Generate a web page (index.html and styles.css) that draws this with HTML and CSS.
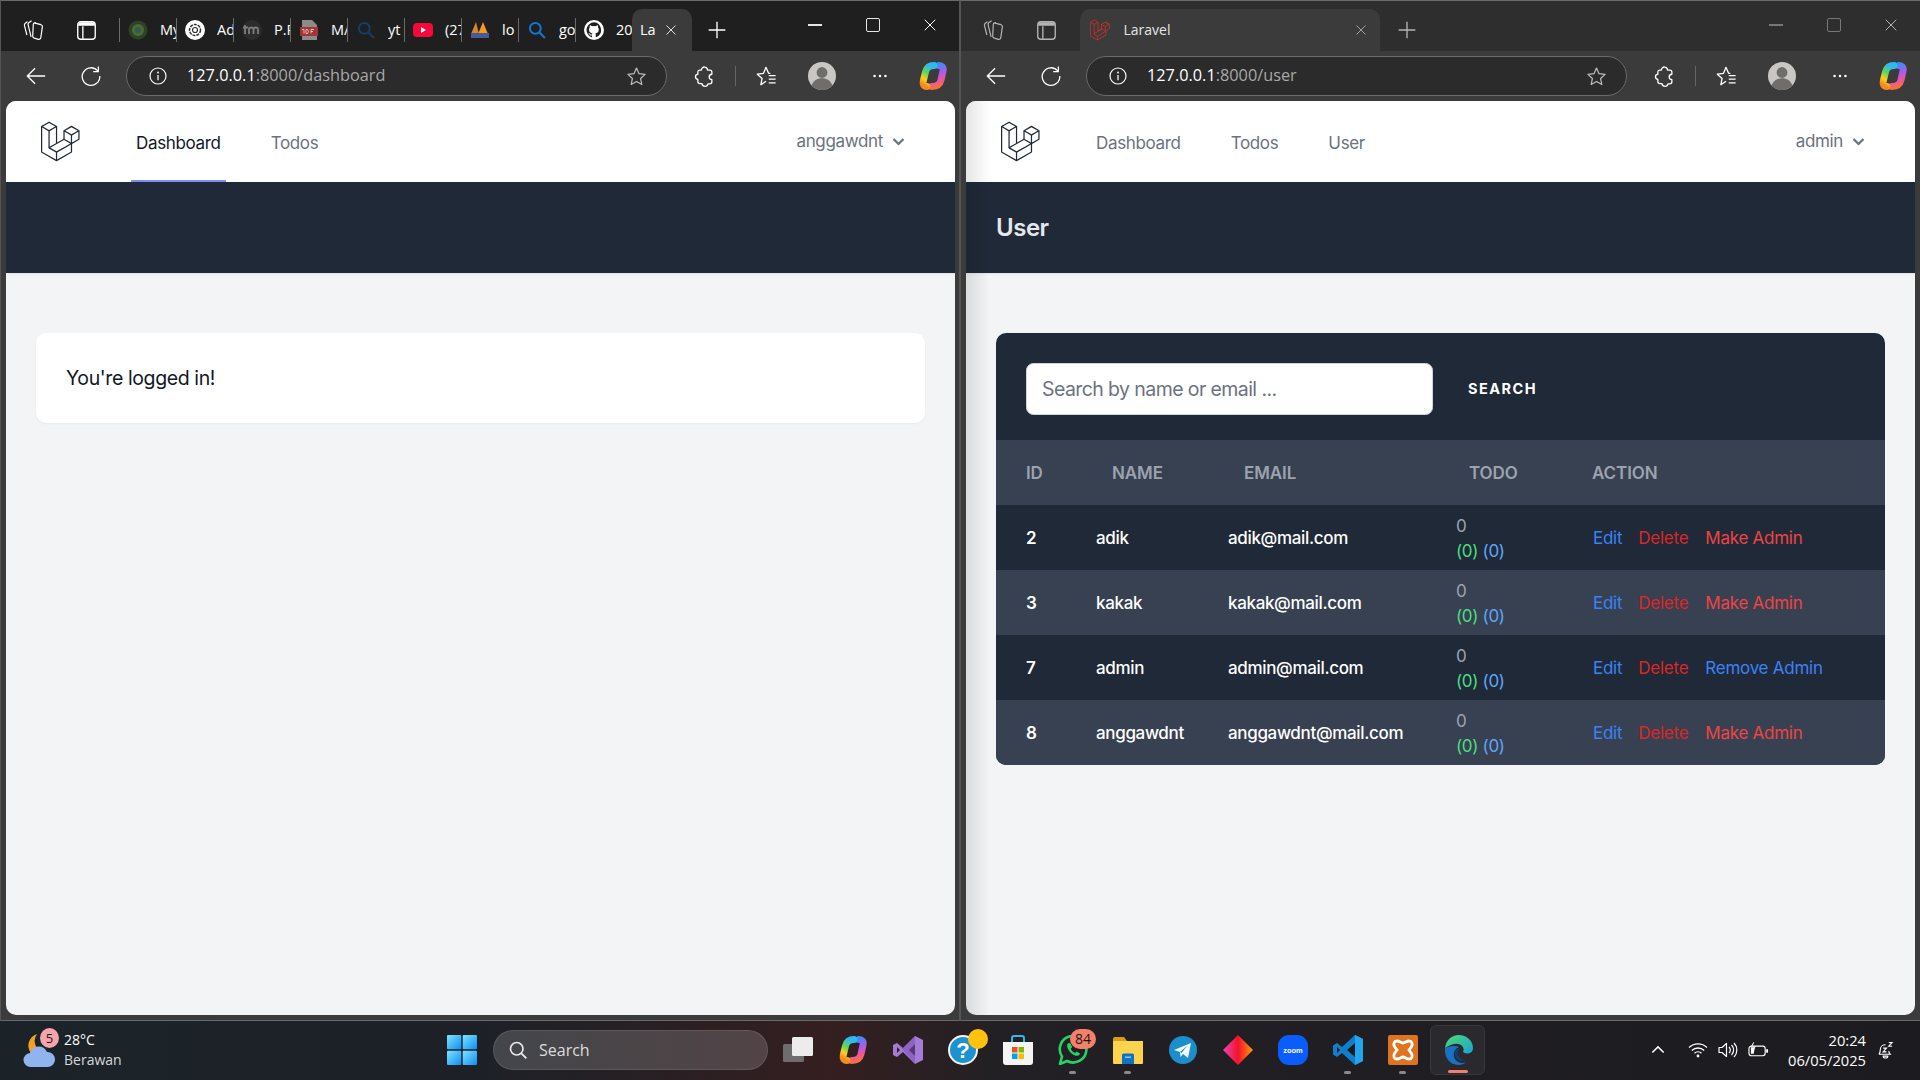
FILE: index.html
```html
<!DOCTYPE html>
<html lang="en">
<head>
<meta charset="utf-8">
<title>Laravel</title>
<link rel="stylesheet" href="styles.css">
</head>
<body>
<svg class="sprite" width="0" height="0" aria-hidden="true">
  <defs>
    <linearGradient id="cpA" x1="0.6" y1="0" x2="0.3" y2="1"><stop offset="0" stop-color="#2fb8f2"/><stop offset=".4" stop-color="#5fd65a"/><stop offset=".72" stop-color="#fbd11e"/><stop offset="1" stop-color="#f58a1f"/></linearGradient>
    <linearGradient id="cpB" x1="0.4" y1="0" x2="0.6" y2="1"><stop offset="0" stop-color="#3f8cf5"/><stop offset=".4" stop-color="#a85cea"/><stop offset=".75" stop-color="#f0559c"/><stop offset="1" stop-color="#f7703c"/></linearGradient>
    <linearGradient id="edgeG" x1="0" y1="0" x2="1" y2="1"><stop offset="0" stop-color="#52d96d"/><stop offset="1" stop-color="#17a3d6"/></linearGradient>
    <linearGradient id="winG" x1="0" y1="0" x2="1" y2="1"><stop offset="0" stop-color="#7fe4ff"/><stop offset="1" stop-color="#0c8df0"/></linearGradient>
    <linearGradient id="gemG" x1="0" y1="0" x2="1" y2="0"><stop offset="0" stop-color="#ef45b5"/><stop offset=".5" stop-color="#f4112e"/><stop offset="1" stop-color="#ff9d00"/></linearGradient>
    <symbol id="i-workspaces" viewBox="0 0 24 24"><path d="M6.500 3.600 4.300 5.300c-.8.6-1 1.500-.8 2.400l2.400 9.300" fill="none" stroke="currentColor" stroke-width="1.200"/><path d="M10.600 2.700 8 4.400c-.8.6-1.100 1.500-.9 2.400l3 12" fill="none" stroke="currentColor" stroke-width="1.200"/><path d="M12.800 4.800 20 6.700c1 .3 1.500 1 1.400 2l-1.600 11c-.2 1.200-1.200 1.900-2.300 1.600l-4.300-1.100c-1-.3-1.500-1.100-1.500-2.100l.6-11.800c.1-1.200 1.300-1.800 2.500-1.500z" fill="none" stroke="currentColor" stroke-width="1.200"/></symbol>
    <symbol id="i-tabs" viewBox="0 0 24 24"><rect x="3.600" y="3.600" width="16.800" height="16.800" rx="3" fill="none" stroke="currentColor" stroke-width="1.300"/><path d="M4 7.500V7a3 3 0 0 1 3-3h10a3 3 0 0 1 3 3v.5z" fill="currentColor"/><path d="M8.500 8v12" stroke="currentColor" stroke-width="1.300"/></symbol>
    <symbol id="i-back" viewBox="0 0 24 24"><path d="M22 12H2.500M11 3.500 2.500 12l8.500 8.500" fill="none" stroke="currentColor" stroke-width="1.400"/></symbol>
    <symbol id="i-reload" viewBox="0 0 24 24"><path d="M19.500 6.600A9.600 9.600 0 1 0 21.600 12" fill="none" stroke="currentColor" stroke-width="1.400"/><path d="M20 1.600v5.600h-5.600" fill="none" stroke="currentColor" stroke-width="1.400"/></symbol>
    <symbol id="i-info" viewBox="0 0 24 24"><circle cx="12" cy="12" r="9.600" fill="none" stroke="currentColor" stroke-width="1.400"/><circle cx="12" cy="7.800" r="1.100" fill="currentColor"/><path d="M12 10.800v6.200" stroke="currentColor" stroke-width="1.500"/></symbol>
    <symbol id="i-star" viewBox="0 0 24 24"><path d="m12 2.400 2.900 6.400 6.900.8-5.100 4.700 1.400 6.900-6.100-3.500-6.100 3.500 1.400-6.900-5.100-4.700 6.900-.8z" fill="none" stroke="currentColor" stroke-width="1.400" stroke-linejoin="round"/></symbol>
    <symbol id="i-ext" viewBox="0 0 24 24"><path d="M8 5.500c.2-2.400 2-3.500 3.700-3.300 1.700.1 2.900 1.400 3.100 3.300h2.400c1.400 0 2.300.9 2.300 2.300v2.300c-1.800.2-3 1.300-3 2.900s1.200 2.700 3 2.900v2.300c0 1.400-.9 2.300-2.300 2.300h-2c-.3 1.700-1.600 2.700-3.200 2.700S9 22 8.700 20.300H6.500c-1.400 0-2.300-.9-2.300-2.300v-2.200C2.600 15.500 1.600 14.400 1.600 12.900s1-2.600 2.600-2.900V7.800c0-1.400.9-2.300 2.300-2.300z" fill="none" stroke="currentColor" stroke-width="1.400" stroke-linejoin="round"/></symbol>
    <symbol id="i-fav" viewBox="0 0 24 24"><path d="M12 17.800l-5.600 3.700 1.300-6.800L2.500 10l6.800-.9L12 2.500l2.800 6.600h2" fill="none" stroke="currentColor" stroke-width="1.400" stroke-linejoin="round"/><path d="M15 11.500h7.500M15 15.500h7.500M15 19.500h7.500" stroke="currentColor" stroke-width="1.400"/></symbol>
    <symbol id="i-profile" viewBox="0 0 28 28"><circle cx="14" cy="14" r="14" fill="#c9c7c3"/><circle cx="14" cy="10.500" r="5.400" fill="#6f6e6c"/><path d="M3.700 23.500c1.600-5 5.600-7.200 10.300-7.200s8.700 2.200 10.300 7.200A14 14 0 0 1 14 28a14 14 0 0 1-10.300-4.500z" fill="#6f6e6c"/></symbol>
    <symbol id="i-dots" viewBox="0 0 24 24"><circle cx="5.500" cy="12" r="1.500" fill="currentColor"/><circle cx="12" cy="12" r="1.500" fill="currentColor"/><circle cx="18.500" cy="12" r="1.500" fill="currentColor"/></symbol>
    <symbol id="i-copilot" viewBox="0 0 30 30"><path d="M14 25.500C20 25.500 22 23 23 19L25 10C25.800 6.500 24 4.500 21 4.500" fill="none" stroke="url(#cpB)" stroke-width="7" stroke-linecap="round"/><path d="M16 4.500C10.500 4.500 8.500 7 7.500 11L5.300 20C4.500 23.500 6 25.500 9 25.500" fill="none" stroke="url(#cpA)" stroke-width="7" stroke-linecap="round"/></symbol>
    <symbol id="i-x" viewBox="0 0 24 24"><path d="M3 3l18 18M21 3 3 21" stroke="currentColor" stroke-width="1.700" fill="none"/></symbol>
    <symbol id="i-plus" viewBox="0 0 24 24"><path d="M12 2v20M2 12h20" stroke="currentColor" stroke-width="1.600" fill="none"/></symbol>
    <symbol id="i-search" viewBox="0 0 24 24"><circle cx="10" cy="10" r="6.500" fill="none" stroke="currentColor" stroke-width="2.400"/><path d="m15 15 6.500 6.500" stroke="currentColor" stroke-width="2.600"/></symbol>
    <symbol id="i-laravel" viewBox="0 0 50 52"><path d="M49 11.400v11.200L39.500 28v10.800L18.500 51 1 41V6.500L10.500 1 20 6.500v21.800l8.500-5V12L38.500 6.500zM38.500 6.500 48 12 38.500 17.500 29 12M10.500 12 1.500 6.800M10.500 12 19.500 6.800M10.500 12v25L18.500 41.500 39 29.500 30 24 10.500 35M18.500 41.500V51M29 12.500v11M38.500 17.500V28" fill="none" stroke="currentColor" stroke-width="2.200" stroke-linejoin="round"/></symbol>
  </defs>
</svg>

<div class="desktop">
  <section class="window window-focus">
    <header class="titlebar">
      <svg class="ico ico-workspace"><use href="#i-workspaces"/></svg>
      <svg class="ico ico-tabs"><use href="#i-tabs"/></svg>
      <div class="tabstrip">
        <div class="tab"><svg class="fav" viewBox="0 0 20 20"><circle cx="10" cy="10" r="9.500" fill="#2c4327"/><circle cx="10" cy="10" r="6" fill="#4d6a2f"/><circle cx="10" cy="10" r="3" fill="#2d5a55"/></svg><span class="tab-title">My</span></div>
        <div class="tab"><svg class="fav" viewBox="0 0 20 20"><circle cx="10" cy="10" r="10" fill="#fff"/><circle cx="10" cy="10" r="5.500" fill="none" stroke="#333" stroke-width="1.500" stroke-dasharray="3 1"/><circle cx="10" cy="10" r="2.500" fill="none" stroke="#333" stroke-width="1.200"/></svg><span class="tab-title">Ad</span></div>
        <div class="tab"><svg class="fav" viewBox="0 0 20 20"><circle cx="10" cy="10" r="10" fill="#2c2c2c"/><path d="M1 7.500h5M3 5v9M7 14V7.500M7 9c1-2 4-2 4.500 0v5M11.500 9c1-2 4-2 4.500 0v5" fill="none" stroke="#7d7d7d" stroke-width="1.800"/></svg><span class="tab-title">P.P</span></div>
        <div class="tab"><svg class="fav" viewBox="0 0 20 20"><path d="M3 0h10l5 5v15H3z" fill="#8b8b8b"/><rect x="1" y="7" width="18" height="9" fill="#a33535"/><path d="M3 9.500h2v4M7 9.500v4h1.500l1-2-1-2zM12 13.500v-4h3M12 11.500h2" fill="none" stroke="#ddd" stroke-width=".8"/></svg><span class="tab-title">M/</span></div>
        <div class="tab"><svg class="fav" viewBox="0 0 24 24"><use href="#i-search" color="#123f66"/></svg><span class="tab-title">yt</span></div>
        <div class="tab"><svg class="fav" viewBox="0 0 20 20"><rect y="3" width="20" height="14" rx="4" fill="#f9063a"/><path d="m8 7 5 3-5 3z" fill="#fff"/></svg><span class="tab-title">(27)</span></div>
        <div class="tab"><svg class="fav" viewBox="0 0 20 20"><path d="M1 14 6 2l3 12z" fill="#d7862a"/><path d="M8 14 13 2l5 12z" fill="#f59b23"/><rect x="1" y="13" width="18" height="5" fill="#4a5a98"/></svg><span class="tab-title">lo</span></div>
        <div class="tab"><svg class="fav" viewBox="0 0 24 24"><use href="#i-search" color="#0d78d4"/></svg><span class="tab-title">go</span></div>
        <div class="tab"><svg class="fav" viewBox="0 0 16 16"><circle cx="8" cy="8" r="8" fill="#fff"/><path d="M8 1.800a6.200 6.200 0 0 0-2 12c.3.100.4-.1.400-.3v-1.100c-1.700.4-2-.8-2-.8-.3-.7-.7-.9-.7-.9-.6-.4 0-.4 0-.4.600 0 1 .6 1 .6.600 1 1.400.7 1.700.5 0-.4.200-.7.400-.9-1.400-.2-2.800-.7-2.800-3 0-.7.200-1.200.6-1.600 0-.2-.3-.8.100-1.600 0 0 .5-.2 1.700.6a6 6 0 0 1 3 0c1.200-.8 1.700-.6 1.700-.6.300.8.100 1.400.1 1.600.4.400.6 1 .6 1.600 0 2.400-1.400 2.800-2.800 3 .2.200.4.600.4 1.200v1.700c0 .2.100.4.400.3A6.200 6.200 0 0 0 8 1.800z" fill="#1f1f1f"/></svg><span class="tab-title">20</span></div>
        <div class="tab tab-active tab-compact"><span class="tab-title">La</span><svg class="ico ico-tabclose"><use href="#i-x"/></svg></div>
      </div>
      <svg class="ico ico-newtab"><use href="#i-plus"/></svg>
      <div class="winctl">
        <span class="ctl ctl-min"></span><span class="ctl ctl-max"></span><svg class="ico ico-close"><use href="#i-x"/></svg>
      </div>
    </header>
    <div class="toolbar">
      <svg class="ico ico-back"><use href="#i-back"/></svg>
      <svg class="ico ico-reload"><use href="#i-reload"/></svg>
      <div class="address">
        <svg class="ico ico-info"><use href="#i-info"/></svg>
        <span class="url"><span class="url-host">127.0.0.1</span>:8000/dashboard</span>
        <svg class="ico ico-star"><use href="#i-star"/></svg>
      </div>
      <svg class="ico ico-ext"><use href="#i-ext"/></svg>
      <span class="tb-sep"></span>
      <svg class="ico ico-fav"><use href="#i-fav"/></svg>
      <svg class="ico ico-profile"><use href="#i-profile"/></svg>
      <svg class="ico ico-dots"><use href="#i-dots"/></svg>
      <svg class="ico ico-copilot"><use href="#i-copilot"/></svg>
    </div>
    <main class="page">
      <nav class="nav">
        <svg class="logo" viewBox="0 0 316 316"><path d="M305.800 81.125C305.770 80.995 305.690 80.885 305.650 80.755C305.560 80.525 305.490 80.285 305.370 80.075C305.290 79.935 305.170 79.815 305.070 79.685C304.940 79.515 304.830 79.325 304.680 79.175C304.550 79.045 304.390 78.955 304.250 78.845C304.090 78.715 303.950 78.575 303.770 78.475L251.320 48.275C249.970 47.495 248.310 47.495 246.960 48.275L194.510 78.475C194.330 78.575 194.190 78.725 194.030 78.845C193.890 78.955 193.730 79.045 193.600 79.175C193.450 79.325 193.340 79.515 193.210 79.685C193.110 79.815 192.990 79.935 192.910 80.075C192.790 80.295 192.710 80.525 192.630 80.755C192.580 80.875 192.510 80.995 192.480 81.125C192.380 81.495 192.330 81.875 192.330 82.265V139.625L148.620 164.795V52.575C148.620 52.185 148.570 51.805 148.470 51.435C148.440 51.305 148.360 51.195 148.320 51.065C148.230 50.835 148.160 50.595 148.040 50.385C147.960 50.245 147.840 50.125 147.740 49.995C147.610 49.825 147.500 49.635 147.350 49.485C147.220 49.355 147.060 49.265 146.920 49.155C146.760 49.025 146.620 48.885 146.440 48.785L93.990 18.585C92.640 17.805 90.980 17.805 89.630 18.585L37.180 48.785C37 48.885 36.860 49.035 36.700 49.155C36.560 49.265 36.400 49.355 36.270 49.485C36.120 49.635 36.010 49.825 35.880 49.995C35.780 50.125 35.660 50.245 35.580 50.385C35.460 50.605 35.380 50.835 35.300 51.065C35.250 51.185 35.180 51.305 35.150 51.435C35.050 51.805 35 52.185 35 52.575V232.235C35 233.795 35.840 235.245 37.190 236.025L142.100 296.425C142.330 296.555 142.580 296.635 142.830 296.725C142.950 296.765 143.060 296.835 143.180 296.865C143.550 296.965 143.930 297.015 144.310 297.015C144.690 297.015 145.070 296.965 145.440 296.865C145.550 296.835 145.650 296.775 145.760 296.735C146.020 296.645 146.280 296.565 146.520 296.425L251.430 236.025C252.780 235.245 253.620 233.805 253.620 232.235V174.875L303.870 145.945C305.220 145.165 306.060 143.725 306.060 142.155V82.265C305.960 81.875 305.900 81.495 305.800 81.125ZM144.200 227.205L100.570 202.515L146.390 176.135L196.660 147.195L240.330 172.335L208.290 190.625L144.200 227.205ZM244.750 114.995V164.795L226.390 154.225L201.030 139.625V89.825L219.390 100.395L244.750 114.995ZM249.120 57.105L292.810 82.265L249.120 107.425L205.430 82.265L249.120 57.105ZM114.490 184.425L96.130 194.995V85.305L121.490 70.705L139.850 60.135V169.815L114.490 184.425ZM91.760 27.425L135.450 52.585L91.760 77.745L48.070 52.585L91.760 27.425ZM43.670 60.135L62.030 70.705L87.390 85.305V202.545V202.555V202.565C87.390 202.735 87.440 202.895 87.460 203.055C87.490 203.265 87.490 203.485 87.550 203.695V203.705C87.600 203.875 87.690 204.035 87.760 204.195C87.840 204.375 87.890 204.575 87.990 204.745C87.990 204.745 87.990 204.755 88 204.755C88.090 204.905 88.220 205.035 88.330 205.175C88.450 205.335 88.550 205.495 88.690 205.635L88.700 205.645C88.820 205.765 88.980 205.855 89.120 205.965C89.280 206.085 89.420 206.225 89.590 206.325C89.600 206.325 89.600 206.325 89.610 206.335C89.620 206.335 89.620 206.345 89.630 206.345L139.870 234.775V285.065L43.670 229.705V60.135ZM244.750 229.705L148.580 285.075V234.775L219.800 194.115L244.750 179.875V229.705ZM297.200 139.625L253.490 164.795V114.995L278.850 100.395L297.210 89.825V139.625H297.200Z"/></svg>
        <div class="nav-links">
          <a class="nav-link nav-link-active">Dashboard</a>
          <a class="nav-link">Todos</a>
        </div>
        <div class="nav-user"><span>anggawdnt</span><svg class="chev" viewBox="0 0 12 12"><path d="m2 4 4 4 4-4" fill="none" stroke="currentColor" stroke-width="1.800"/></svg></div>
      </nav>
      <div class="page-header"></div>
      <div class="content">
        <div class="card-light">You're logged in!</div>
      </div>
    </main>
  </section>

  <section class="window window-blur">
    <header class="titlebar">
      <svg class="ico ico-workspace"><use href="#i-workspaces"/></svg>
      <svg class="ico ico-tabs"><use href="#i-tabs"/></svg>
      <div class="tabstrip tabstrip-single">
        <div class="tab tab-active tab-wide">
          <svg class="fav fav-laravel"><use href="#i-laravel"/></svg>
          <span class="tab-title">Laravel</span>
          <svg class="ico ico-tabclose"><use href="#i-x"/></svg>
        </div>
      </div>
      <svg class="ico ico-newtab"><use href="#i-plus"/></svg>
      <div class="winctl">
        <span class="ctl ctl-min"></span><span class="ctl ctl-max"></span><svg class="ico ico-close"><use href="#i-x"/></svg>
      </div>
    </header>
    <div class="toolbar">
      <svg class="ico ico-back"><use href="#i-back"/></svg>
      <svg class="ico ico-reload"><use href="#i-reload"/></svg>
      <div class="address">
        <svg class="ico ico-info"><use href="#i-info"/></svg>
        <span class="url"><span class="url-host">127.0.0.1</span>:8000/user</span>
        <svg class="ico ico-star"><use href="#i-star"/></svg>
      </div>
      <svg class="ico ico-ext"><use href="#i-ext"/></svg>
      <span class="tb-sep"></span>
      <svg class="ico ico-fav"><use href="#i-fav"/></svg>
      <svg class="ico ico-profile"><use href="#i-profile"/></svg>
      <svg class="ico ico-dots"><use href="#i-dots"/></svg>
      <svg class="ico ico-copilot"><use href="#i-copilot"/></svg>
    </div>
    <main class="page page-shade">
      <nav class="nav">
        <svg class="logo" viewBox="0 0 316 316"><path d="M305.800 81.125C305.770 80.995 305.690 80.885 305.650 80.755C305.560 80.525 305.490 80.285 305.370 80.075C305.290 79.935 305.170 79.815 305.070 79.685C304.940 79.515 304.830 79.325 304.680 79.175C304.550 79.045 304.390 78.955 304.250 78.845C304.090 78.715 303.950 78.575 303.770 78.475L251.320 48.275C249.970 47.495 248.310 47.495 246.960 48.275L194.510 78.475C194.330 78.575 194.190 78.725 194.030 78.845C193.890 78.955 193.730 79.045 193.600 79.175C193.450 79.325 193.340 79.515 193.210 79.685C193.110 79.815 192.990 79.935 192.910 80.075C192.790 80.295 192.710 80.525 192.630 80.755C192.580 80.875 192.510 80.995 192.480 81.125C192.380 81.495 192.330 81.875 192.330 82.265V139.625L148.620 164.795V52.575C148.620 52.185 148.570 51.805 148.470 51.435C148.440 51.305 148.360 51.195 148.320 51.065C148.230 50.835 148.160 50.595 148.040 50.385C147.960 50.245 147.840 50.125 147.740 49.995C147.610 49.825 147.500 49.635 147.350 49.485C147.220 49.355 147.060 49.265 146.920 49.155C146.760 49.025 146.620 48.885 146.440 48.785L93.990 18.585C92.640 17.805 90.980 17.805 89.630 18.585L37.180 48.785C37 48.885 36.860 49.035 36.700 49.155C36.560 49.265 36.400 49.355 36.270 49.485C36.120 49.635 36.010 49.825 35.880 49.995C35.780 50.125 35.660 50.245 35.580 50.385C35.460 50.605 35.380 50.835 35.300 51.065C35.250 51.185 35.180 51.305 35.150 51.435C35.050 51.805 35 52.185 35 52.575V232.235C35 233.795 35.840 235.245 37.190 236.025L142.100 296.425C142.330 296.555 142.580 296.635 142.830 296.725C142.950 296.765 143.060 296.835 143.180 296.865C143.550 296.965 143.930 297.015 144.310 297.015C144.690 297.015 145.070 296.965 145.440 296.865C145.550 296.835 145.650 296.775 145.760 296.735C146.020 296.645 146.280 296.565 146.520 296.425L251.430 236.025C252.780 235.245 253.620 233.805 253.620 232.235V174.875L303.870 145.945C305.220 145.165 306.060 143.725 306.060 142.155V82.265C305.960 81.875 305.900 81.495 305.800 81.125ZM144.200 227.205L100.570 202.515L146.390 176.135L196.660 147.195L240.330 172.335L208.290 190.625L144.200 227.205ZM244.750 114.995V164.795L226.390 154.225L201.030 139.625V89.825L219.390 100.395L244.750 114.995ZM249.120 57.105L292.810 82.265L249.120 107.425L205.430 82.265L249.120 57.105ZM114.490 184.425L96.130 194.995V85.305L121.490 70.705L139.850 60.135V169.815L114.490 184.425ZM91.760 27.425L135.450 52.585L91.760 77.745L48.070 52.585L91.760 27.425ZM43.670 60.135L62.030 70.705L87.390 85.305V202.545V202.555V202.565C87.390 202.735 87.440 202.895 87.460 203.055C87.490 203.265 87.490 203.485 87.550 203.695V203.705C87.600 203.875 87.690 204.035 87.760 204.195C87.840 204.375 87.890 204.575 87.990 204.745C87.990 204.745 87.990 204.755 88 204.755C88.090 204.905 88.220 205.035 88.330 205.175C88.450 205.335 88.550 205.495 88.690 205.635L88.700 205.645C88.820 205.765 88.980 205.855 89.120 205.965C89.280 206.085 89.420 206.225 89.590 206.325C89.600 206.325 89.600 206.325 89.610 206.335C89.620 206.335 89.620 206.345 89.630 206.345L139.870 234.775V285.065L43.670 229.705V60.135ZM244.750 229.705L148.580 285.075V234.775L219.800 194.115L244.750 179.875V229.705ZM297.200 139.625L253.490 164.795V114.995L278.850 100.395L297.210 89.825V139.625H297.200Z"/></svg>
        <div class="nav-links">
          <a class="nav-link">Dashboard</a>
          <a class="nav-link">Todos</a>
          <a class="nav-link">User</a>
        </div>
        <div class="nav-user"><span>admin</span><svg class="chev" viewBox="0 0 12 12"><path d="m2 4 4 4 4-4" fill="none" stroke="currentColor" stroke-width="1.800"/></svg></div>
      </nav>
      <div class="page-header"><h1 class="page-title">User</h1></div>
      <div class="content">
        <div class="card-dark">
          <form class="search">
            <input class="search-input" type="text" placeholder="Search by name or email ...">
            <button class="search-btn" type="button">Search</button>
          </form>
          <div class="thead">
            <span>ID</span><span>Name</span><span>Email</span><span>Todo</span><span>Action</span>
          </div>
          <div class="trow">
            <span class="c-id">2</span><span>adik</span><span>adik@mail.com</span>
            <div class="c-todo"><span>0</span><span><b class="t-green">(0)</b> <b class="t-blue">(0)</b></span></div>
            <div class="c-actions"><a class="a-edit">Edit</a><a class="a-del">Delete</a><a class="a-make">Make Admin</a></div>
          </div>
          <div class="trow">
            <span class="c-id">3</span><span>kakak</span><span>kakak@mail.com</span>
            <div class="c-todo"><span>0</span><span><b class="t-green">(0)</b> <b class="t-blue">(0)</b></span></div>
            <div class="c-actions"><a class="a-edit">Edit</a><a class="a-del">Delete</a><a class="a-make">Make Admin</a></div>
          </div>
          <div class="trow">
            <span class="c-id">7</span><span>admin</span><span>admin@mail.com</span>
            <div class="c-todo"><span>0</span><span><b class="t-green">(0)</b> <b class="t-blue">(0)</b></span></div>
            <div class="c-actions"><a class="a-edit">Edit</a><a class="a-del">Delete</a><a class="a-remove">Remove Admin</a></div>
          </div>
          <div class="trow">
            <span class="c-id">8</span><span>anggawdnt</span><span>anggawdnt@mail.com</span>
            <div class="c-todo"><span>0</span><span><b class="t-green">(0)</b> <b class="t-blue">(0)</b></span></div>
            <div class="c-actions"><a class="a-edit">Edit</a><a class="a-del">Delete</a><a class="a-make">Make Admin</a></div>
          </div>
        </div>
      </div>
    </main>
  </section>
</div>

<footer class="taskbar">
  <div class="weather">
    <span class="weather-icon">
      <svg viewBox="0 0 32 36" width="32" height="36"><path d="M14 1a12 12 0 0 0 9 19H8A12 12 0 0 1 14 1z" fill="#f3a21f"/><path d="M8 34a7 7 0 0 1-1-14 9 9 0 0 1 17-1 7.500 7.500 0 0 1 1 15z" fill="#8fb4ee"/></svg>
      <span class="weather-badge">5</span>
    </span>
    <div class="weather-text"><span class="w-temp">28°C</span><span class="w-desc">Berawan</span></div>
  </div>
  <svg class="start" viewBox="0 0 30 30"><rect width="14.300" height="14.300" rx="1" fill="url(#winG)"/><rect x="15.700" width="14.300" height="14.300" rx="1" fill="url(#winG)"/><rect y="15.700" width="14.300" height="14.300" rx="1" fill="url(#winG)"/><rect x="15.700" y="15.700" width="14.300" height="14.300" rx="1" fill="url(#winG)"/></svg>
  <div class="tb-search">
    <svg class="tb-search-ico" viewBox="0 0 24 24"><circle cx="10.500" cy="10.500" r="7.500" fill="none" stroke="#e8e8e8" stroke-width="2"/><path d="m16 16 6 6" stroke="#e8e8e8" stroke-width="2.200"/></svg>
    <span>Search</span>
  </div>
  <div class="apps">
    <div class="app"><svg viewBox="0 0 30 30"><rect x="0" y="9" width="21" height="18" rx="1.500" fill="#6d6d6d"/><rect x="9" y="2" width="21" height="19" rx="1.500" fill="#ececec"/></svg></div>
    <div class="app"><svg viewBox="0 0 30 30"><use href="#i-copilot"/></svg></div>
    <div class="app"><svg viewBox="0 0 30 30"><path d="M22 1 30 5v20l-8 4L10 17l-6 5-4-2V10l4-2 6 5zM22 9l-6 6 6 6zM4 12v6l3-3z" fill="#a67bd8"/><path d="M22 1 10 13l-6-5 18 21z" fill="#7a50b5" opacity=".55"/></svg></div>
    <div class="app app-badged"><svg viewBox="0 0 30 30"><circle cx="15" cy="15" r="14" fill="#1d92d0" stroke="#f5f5f5" stroke-width="2"/><text class="help-mark" x="15" y="23" text-anchor="middle">?</text></svg><span class="dot-yellow"></span></div>
    <div class="app"><svg viewBox="0 0 30 30"><path d="M9 7V3a2 2 0 0 1 2-2h8a2 2 0 0 1 2 2v4" fill="none" stroke="#35b6ef" stroke-width="2"/><path d="M0 7h30v20a3 3 0 0 1-3 3H3a3 3 0 0 1-3-3z" fill="#f4f4f4"/><rect x="9" y="12" width="5.500" height="5.500" fill="#f25022"/><rect x="15.500" y="12" width="5.500" height="5.500" fill="#7fba00"/><rect x="9" y="18.500" width="5.500" height="5.500" fill="#00a4ef"/><rect x="15.500" y="18.500" width="5.500" height="5.500" fill="#ffb900"/></svg></div>
    <div class="app app-open app-badged"><svg viewBox="0 0 30 30"><path d="M2 29l2-7.500A13.300 13.300 0 1 1 9 26z" fill="none" stroke="#25d366" stroke-width="2.600" stroke-linejoin="round"/><path d="M10.500 8c-1.500 1-2 3-.5 6 1.700 3.300 4 5.300 7 6.500 2.500.9 4.500-.2 5-2l-3.500-2-1.500 1.500c-2-.8-3.500-2.500-4.300-4.300l1.500-1.500-2-4z" fill="#25d366"/></svg><span class="count-badge">84</span></div>
    <div class="app app-open"><svg viewBox="0 0 30 30"><path d="M0 4a2 2 0 0 1 2-2h9l3 4H0z" fill="#d99d13"/><path d="M0 6h30v22a1 1 0 0 1-1 1H1a1 1 0 0 1-1-1z" fill="#fbd44f"/><path d="M9 20a1.500 1.500 0 0 1 1.500-1.500h9A1.500 1.500 0 0 1 21 20v9H9z" fill="#0f72c4"/><rect x="12" y="21.500" width="6" height="1.500" fill="#86c6f3"/></svg></div>
    <div class="app"><svg viewBox="0 0 30 30"><circle cx="15" cy="15" r="14" fill="#1b8fcb"/><path d="M6 15 23 8l-3 15-5-4-2.500 3-.5-5z" fill="#f2f8fc"/><path d="m12 17 7-6-5.500 7z" fill="#1b8fcb"/></svg></div>
    <div class="app"><svg viewBox="0 0 30 30"><path d="M15 0 30 15 15 30 0 15z" fill="url(#gemG)"/></svg></div>
    <div class="app"><svg viewBox="0 0 30 30"><rect width="30" height="30" rx="11" fill="#0b5cff"/><text class="zoom-mark" x="15" y="17.500" text-anchor="middle">zoom</text></svg></div>
    <div class="app app-open"><svg viewBox="0 0 30 30"><path d="M22 0 30 4v22l-8 4L9 18l-5 4-4-2.500v-9L4 8l5 4z" fill="#0f7fcb"/><path d="M22 0 30 4v22l-8 4z" fill="#22a5ec"/><path d="M22 8v14l-8-7z" fill="#1b1b1e"/><path d="M4 12v6l3-3z" fill="#1b1b1e"/></svg></div>
    <div class="app app-open"><svg viewBox="0 0 30 30"><rect width="30" height="30" rx="2" fill="#e0731f"/><path d="M9 6c-3 0-4 3-2.500 5.500L9 15l-2.500 3.500C5 21 6 24 9 24c2.500 0 4-2 6-2s3.500 2 6 2c3 0 4-3 2.500-5.500L21 15l2.500-3.500C25 9 24 6 21 6c-2.500 0-4 2-6 2s-3.500-2-6-2z" fill="none" stroke="#fff" stroke-width="2.800"/></svg></div>
    <div class="app app-active"><svg viewBox="0 0 30 30"><path d="M2 13C3 5 9 0 15.500 0 24 0 30 6 30 13c0 3-2 5.500-5.500 5.500-2.500 0-4-1-4.500-2 1-1 1-3-.5-5C17.500 8.500 13 8 9 9.500 5.500 10.800 3 12.500 2 13z" fill="url(#edgeG)"/><path d="M2 13c-1 8 4 17 13.500 17 3 0 5.500-1 7.500-2.500-5 1.500-11-.5-12-6-1-4.500 1.500-8 5-9.500-5-2.500-12 .5-14 1z" fill="#1673c4"/><path d="M12 17c-1 5 3 9 8 9 2 0 3-.5 3-.5S17 25 15 20c-.6-2 0-5 2-6-2.500-.5-4.500 1-5 3z" fill="#123d7e"/></svg></div>
  </div>
  <div class="tray">
    <svg class="tray-chev" viewBox="0 0 16 10"><path d="m1.500 8.500 6.500-6.500 6.500 6.500" fill="none" stroke="#fff" stroke-width="1.700"/></svg>
    <svg class="tray-wifi" viewBox="0 0 20 16"><path d="M1 5.500a13 13 0 0 1 18 0M3.800 8.500a9 9 0 0 1 12.400 0M6.500 11.300a5 5 0 0 1 7 0" fill="none" stroke="#fff" stroke-width="1.300"/><circle cx="10" cy="14" r="1.400" fill="#fff"/></svg>
    <svg class="tray-vol" viewBox="0 0 20 16"><path d="M1 5.500h3L8.500 1.500v13L4 10.500H1z" fill="none" stroke="#fff" stroke-width="1.200" stroke-linejoin="round"/><path d="M11 5a4 4 0 0 1 0 6M13.500 3a7 7 0 0 1 0 10M16 1a10 10 0 0 1 0 14" fill="none" stroke="#fff" stroke-width="1.200"/></svg>
    <svg class="tray-batt" viewBox="0 0 22 16"><rect x="1" y="4" width="17" height="10" rx="2.500" fill="none" stroke="#fff" stroke-width="1.200"/><rect x="19" y="7" width="2" height="4" rx="1" fill="#fff"/><path d="M3 12V6h4l-1 6z" fill="#fff"/><path d="M6 0 3.500 5H7L5 9" fill="none" stroke="#fff" stroke-width="1.100"/></svg>
    <div class="clock"><span>20:24</span><span>06/05/2025</span></div>
    <svg class="tray-bell" viewBox="0 0 18 18"><path d="M2 13.500c1.500-1.500 1.500-3 1.500-5C3.500 5.500 6 3.500 9 3.500M2 13.500h12c-1-1-1.500-2-1.500-3.500" fill="none" stroke="#fff" stroke-width="1.200"/><path d="M6.500 15.500a2.500 2 0 0 0 5 0z" fill="none" stroke="#fff" stroke-width="1.100"/><path d="M6.500 7h3.500l-3.500 4H10M12.500 1H16l-3.500 4H16" fill="none" stroke="#fff" stroke-width="1.200"/></svg>
  </div>
</footer>
</body>
</html>
```

FILE: styles.css
```css
* { box-sizing: border-box; }
html, body { margin: 0; padding: 0; }
body {
  width: 1920px;
  height: 1080px;
  overflow: hidden;
  background: #3b3b3b;
  font-family: "Inter", "Liberation Sans", sans-serif;
  display: flex;
  flex-direction: column;
}
.sprite { position: absolute; }

.desktop { display: flex; height: 1021px; }
.window {
  width: 960px;
  display: flex;
  flex-direction: column;
  background: #3b3b3b;
  border-top: 1px solid #6a6a6a;
  border-bottom: 1px solid #6a6a6a;
  border-left: 1px solid #555;
}
.window-focus { border-right: 1px solid #555; }

/* browser chrome */
.ico { display: block; flex: none; color: #fff; }
.titlebar {
  height: 50px;
  flex: none;
  display: flex;
  align-items: center;
  background: #1f1f1f;
  font-family: "Open Sans", "Noto Sans", sans-serif;
  color: #fff;
}
.window-blur .titlebar { background: #2e2e2e; }
.window-blur .titlebar .ico { color: #b5b5b5; }
.ico-workspace { width: 24px; height: 24px; margin: 8px 0 0 20px; }
.ico-tabs { width: 25px; height: 25px; margin: 8px 0 0 28.5px; }
.tabstrip { display: flex; align-self: flex-end; height: 42px; margin-left: 20.5px; }
.tabstrip-single { margin-left: 21px; }
.tab {
  width: 57px;
  height: 42px;
  padding: 0 0 1px 9px;
  display: flex;
  align-items: center;
  gap: 12px;
  overflow: hidden;
  position: relative;
  font-size: 14.5px;
}
.tab::before { content: ""; position: absolute; left: 0; top: 9px; height: 24px; width: 1px; background: #6b6b6b; }
.tab-title { white-space: nowrap; overflow: hidden; min-width: 0; flex: 1; }
.fav { width: 20px; height: 20px; flex: none; }
.fav-laravel { color: #c4302b; width: 20px; height: 24px; }
.tab-active {
  background: #3b3b3b;
  border-radius: 10px 10px 0 0;
}
.tab-active::before { display: none; }
.tab-compact { width: 60px; gap: 0; padding-left: 8px; }
.tab-compact .tab-title { flex: none; width: 22px; }
.tab-wide { width: 300px; gap: 14px; padding-left: 10px; padding-right: 13px; }
.tab-wide .tab-title { color: #e6e6e6; font-size: 14px; }
.ico-tabclose { width: 12px; height: 12px; margin-left: 3px; }
.ico-newtab { width: 20px; height: 20px; margin: 7px 0 0 15px; }
.tabstrip-single + .ico-newtab { margin-left: 17px; }
.winctl { margin-left: auto; display: flex; align-items: center; gap: 0; height: 100%; margin-right: 22px; }
.ctl { display: block; flex: none; }
.ctl-min { width: 14px; height: 1.5px; background: #e6e6e6; margin-right: 44px; margin-top: -2px; }
.ctl-max { width: 14px; height: 14px; border: 1.5px solid #e6e6e6; border-radius: 2px; margin-right: 43px; margin-top: -2px; }
.ico-close { width: 14px; height: 14px; margin-top: -3px; }
.window-blur .ctl-min { background: #777; }
.window-blur .ctl-max { border-color: #777; }
.window-blur .ico-close { color: #777; }

.toolbar {
  height: 50px;
  flex: none;
  display: flex;
  align-items: center;
  color: #fff;
}
.ico-back { width: 22px; height: 22px; margin-left: 24px; }
.ico-reload { width: 22px; height: 22px; margin-left: 33px; }
.address {
  width: 541px;
  height: 40px;
  margin-left: 24px;
  display: flex;
  align-items: center;
  background: #2b2b2b;
  border: 1.5px solid #6a6a6a;
  border-radius: 20px;
  padding: 0 19px 0 21px;
}
.ico-info { width: 20px; height: 20px; }
.url { font-family: "Open Sans", "Noto Sans", sans-serif; font-size: 16.3px; color: #a8a8a8; margin: -2px 0 0 19px; flex: 1; white-space: nowrap; }
.url-host { color: #fff; }
.ico-star { width: 21px; height: 21px; color: #bdbdbd; }
.ico-ext { width: 22px; height: 22px; margin-left: 27px; }
.tb-sep { width: 1px; height: 20px; background: #666; margin-left: 19px; flex: none; }
.ico-fav { width: 22px; height: 22px; margin-left: 19px; }
.ico-profile { width: 28px; height: 28px; margin-left: 31px; }
.ico-dots { width: 20px; height: 20px; margin-left: 34px; }
.ico-copilot { width: 30px; height: 30px; margin-left: 28px; }

/* app page */
.page {
  width: 949px;
  height: 914px;
  margin-left: 5px;
  background: #f3f4f6;
  border-radius: 10px;
  overflow: hidden;
  position: relative;
}
.page-shade::after {
  content: "";
  position: absolute;
  inset: 0 auto 0 0;
  width: 24px;
  background: linear-gradient(to right, rgba(0,0,0,.1), rgba(0,0,0,0));
  pointer-events: none;
}
.nav {
  height: 81px;
  background: #fff;
  display: flex;
  align-items: center;
  padding: 0 30px;
  font-size: 17px;
  letter-spacing: -0.02em;
}
.logo { width: 45px; height: 45px; fill: #1f2937; flex: none; }
.nav-links { display: flex; gap: 40px; margin-left: 50px; height: 100%; }
.nav-link {
  padding: 4.5px 5px 0;
  display: flex;
  align-items: center;
  color: #6b7280;
  border-bottom: 2.5px solid transparent;
}
.nav-link-active { color: #111827; border-bottom-color: #818cf8; }
.nav-user { margin-left: auto; display: flex; align-items: center; gap: 8px; color: #6b7280; padding-right: 19px; margin-top: -1px; }
.chev { width: 15px; height: 15px; }
.page-header {
  height: 91px;
  background: #1f2937;
  padding: 0 30px;
  display: flex;
  align-items: center;
  box-shadow: 0 1px 2px rgba(0,0,0,.08);
}
.page-title { margin: 0; font-size: 24px; font-weight: 600; color: #e5e7eb; letter-spacing: -0.02em; }
.content { padding: 60px 30px 0; }
.card-light {
  background: #fff;
  border-radius: 10px;
  padding: 30px;
  height: 90px;
  font-size: 19.5px;
  line-height: 30px;
  color: #111827;
  letter-spacing: -0.02em;
  box-shadow: 0 1px 2px rgba(0,0,0,.05);
}
.card-dark {
  background: #1f2937;
  border-radius: 10px;
  overflow: hidden;
  color: #fff;
  font-size: 17px;
  letter-spacing: -0.02em;
}
.search { display: flex; align-items: center; padding: 30px 30px 25px; }
.search-input {
  width: 407px;
  height: 52px;
  border: 1px solid #d1d5db;
  border-radius: 7.5px;
  background: #fff;
  padding: 0 15px;
  font: inherit;
  font-size: 19.5px;
  letter-spacing: -0.03em;
}
.search-input::placeholder { color: #6b7280; opacity: 1; }
.search-btn {
  margin: -1px 0 0 35px;
  padding: 0;
  border: 0;
  background: none;
  color: #fff;
  font: inherit;
  font-size: 14.5px;
  font-weight: 700;
  letter-spacing: 0.1em;
  text-transform: uppercase;
}
.thead, .trow { display: grid; align-items: center; height: 65px; padding-left: 30px; }
.thead {
  grid-template-columns: 86px 132px 225px 123px 1fr;
  background: #374151;
  color: #9ca3af;
  font-weight: 600;
  letter-spacing: -0.005em;
  text-transform: uppercase;
}
.trow { grid-template-columns: 70px 132px 228px 137px 1fr; font-weight: 500; }
.trow:nth-of-type(even) { background: #1f2937; }
.trow:nth-of-type(odd) { background: #374151; }
.c-id { font-weight: 600; }
.c-todo { display: flex; flex-direction: column; font-weight: 400; color: #9ca3af; line-height: 25px; padding-top: 2px; }
.c-todo b { font-weight: 400; }
.t-green { color: #4ade80; }
.t-blue { color: #60a5fa; }
.c-actions { display: flex; gap: 16px; font-weight: 400; letter-spacing: -0.015em; }
.a-edit { color: #3b82f6; }
.a-del { color: #dc2626; margin-right: 1px; }
.a-make { color: #ef4444; }
.a-remove { color: #3b82f6; }

/* taskbar */
.taskbar {
  height: 59px;
  flex: none;
  display: flex;
  align-items: center;
  background: linear-gradient(90deg, #1b2329 0%, #1d2127 25%, #2d1f22 38%, #351f20 43%, #222024 52%, #1c1b1f 100%);
  font-family: "Open Sans", "Noto Sans", sans-serif;
  color: #fff;
  padding: 0 0 2px 23px;
}
.weather { width: 424px; display: flex; align-items: center; gap: 7px; }
.weather-icon { position: relative; width: 34px; height: 36px; display: block; margin-top: 2px; }
.weather-badge {
  position: absolute;
  left: 17px;
  top: -5px;
  width: 19px;
  height: 20px;
  border-radius: 50%;
  background: #f7a3ac;
  color: #1a1a1a;
  font-size: 13px;
  line-height: 20px;
  text-align: center;
}
.weather-text { display: flex; flex-direction: column; line-height: 20px; font-size: 14px; }
.w-desc { color: #d8d8d8; }
.start { width: 30px; height: 30px; flex: none; }
.tb-search {
  width: 275px;
  height: 40px;
  margin-left: 16px;
  border-radius: 20px;
  background: rgba(255,255,255,.17);
  border: 1px solid rgba(255,255,255,.1);
  display: flex;
  align-items: center;
  gap: 11px;
  padding-left: 14px;
  font-size: 16px;
  color: #dcdcdc;
}
.tb-search-ico { width: 20px; height: 20px; }
.apps { display: flex; margin-left: 2px; }
.app {
  width: 55px;
  height: 50px;
  display: flex;
  align-items: center;
  justify-content: center;
  position: relative;
}
.app > svg { width: 30px; height: 30px; }
.app-open::after, .app-active::after {
  content: "";
  position: absolute;
  bottom: 1px;
  left: 50%;
  width: 7px;
  height: 3px;
  margin-left: -3.5px;
  border-radius: 2px;
  background: #8a8a8a;
}
.app-active {
  background: #2a2a2e;
  border: 1px solid #38383c;
  border-radius: 6px;
}
.app-active::after { width: 20px; margin-left: -10px; background: #f4806b; }
.dot-yellow {
  position: absolute;
  left: 33px;
  top: 4px;
  width: 20px;
  height: 20px;
  border-radius: 50%;
  background: #ffc20e;
}
.help-mark { font: 700 22px "Liberation Sans", sans-serif; fill: #fff; }
.zoom-mark { font: 700 7.5px "Liberation Sans", sans-serif; fill: #fff; }
.count-badge {
  position: absolute;
  left: 25px;
  top: 4px;
  width: 26px;
  height: 20px;
  border-radius: 10px;
  background: #f4806b;
  color: #1a1a1a;
  font-size: 14px;
  line-height: 20px;
  text-align: center;
}
.tray { margin-left: auto; display: flex; align-items: center; width: 272px; height: 100%; }
.tray-chev { width: 14px; height: 9px; margin-left: 3px; }
.tray-wifi { width: 20px; height: 16px; margin-left: 23px; }
.tray-vol { width: 20px; height: 16px; margin-left: 10px; }
.tray-batt { width: 21px; height: 16px; margin-left: 10px; }
.clock {
  width: 97px;
  display: flex;
  flex-direction: column;
  align-items: flex-end;
  font-size: 14.7px;
  line-height: 20px;
  flex: none;
}
.tray-bell { width: 17px; height: 18px; margin-left: 11px; }
```
